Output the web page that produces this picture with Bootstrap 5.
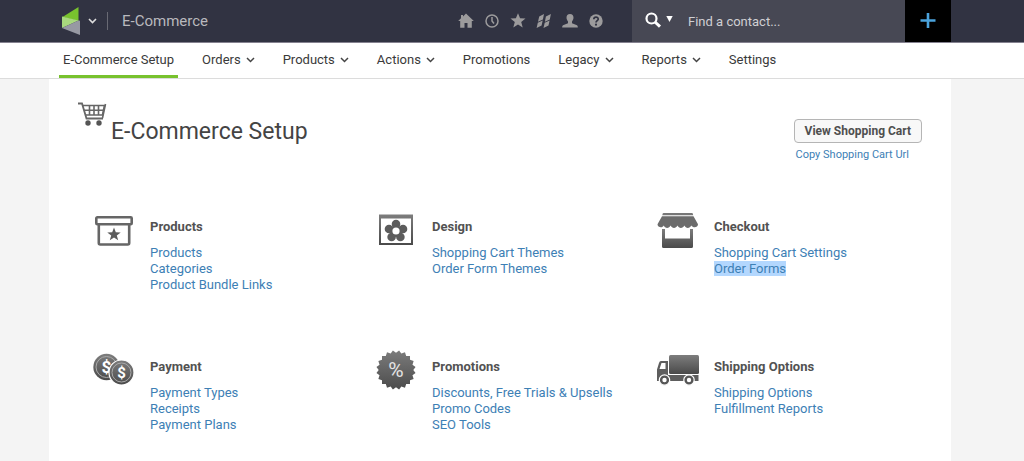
<!DOCTYPE html>
<html lang="en">
<head>
<meta charset="utf-8">
<meta name="viewport" content="width=device-width, initial-scale=1">
<title>E-Commerce Setup</title>
<link href="https://cdn.jsdelivr.net/npm/bootstrap@5.3.0/dist/css/bootstrap.min.css" rel="stylesheet">
<style>
  body { font: 13px/16px Roboto, "Liberation Sans", sans-serif; background: #f4f4f4; color: #444; }
  a { color: #3d80b5; text-decoration: none; }
  a:hover { text-decoration: underline; }
  svg { display: block; }
  .gutters { padding-left: 49px; padding-right: 73px; }

  .topbar { background: #313342; border-bottom: 1px solid #858290; min-height: 43px; }
  .logo-btn { padding: 0 0 0 13px; gap: 8px; }
  .app-name { color: #b9b9bd; font-size: 15px; line-height: 18px; margin-left: 10px; padding-left: 14px; border-left: 1px solid #696a74; }
  .tools { gap: 8px; margin-right: 27px; }
  .tools a { color: #9c9b9c; }
  .finder { background: #474854; width: 273px; padding-left: 13px; color: #fff; }
  .finder input { background: none; border: 0; outline: 0; color: #fff; flex: 1; min-width: 0; padding: 2px 0 0 15px; }
  .finder input::placeholder { color: #cfcfd3; opacity: 1; }
  .add-btn { background: #000; width: 46px; color: #4ba3dc; }

  .subnav { background: #fff; border-bottom: 1px solid #dcdcdc; }
  .subnav .nav { gap: 20px; padding-left: 10px; }
  .subnav .nav-link { color: #3a3a3a; padding: 9px 4px 7px; gap: 5px; border-bottom: 3px solid transparent; }
  .subnav .nav-link.active { border-bottom-color: #78c22e; }

  .sheet { background: #fff; min-height: calc(100vh - 78px); padding: 22px 13px 27px 28px; }
  .page-title { font-size: 23px; line-height: 28px; margin: 17px 0 0 4px; color: #444; font-weight: 400; }
  .cart-actions { margin: 18px 16px 0 0; gap: 4px; }
  .cart-btn { font-size: 12px; line-height: 16px; font-weight: 700; color: #4f4f4f; background: #f8f8f8; border: 1px solid #b5b5b5; border-radius: 4px; padding: 3px 10px; }
  .copy-link { font-size: 11px; padding-left: 2px; }
  .groups { padding-left: 15px; row-gap: 59px; margin-top: 49px; }
  .group { min-height: 81px; }
  .pict { width: 44px; margin-right: 14px; overflow: visible; }
  .group h2 { font-size: 13px; line-height: 16px; font-weight: 700; color: #525252; margin: 7px 0 10px; }
  .picked { background: #b3d7fe; }
</style>
</head>
<body>
<header class="topbar gutters d-flex align-items-stretch">
  <div class="d-flex align-items-center">
    <button class="btn logo-btn border-0 d-flex align-items-center" type="button" aria-label="Switch app">
      <svg width="18" height="28" viewBox="0 0 18 28"><path d="M16.500 0v14L.5 10z" fill="#78c22e"/><path d="M0 9.500l16.500 4L0 21z" fill="#a9d97e"/><path d="M0 21l16.500-7.500 1.500.3V28z" fill="#9799a3"/></svg>
      <svg width="9" height="6" viewBox="0 0 9 6" fill="none" stroke="#ddd" stroke-width="1.600"><path d="M1 1l3.500 3.500L8 1"/></svg>
    </button>
    <span class="app-name">E-Commerce</span>
  </div>
  <nav class="tools d-flex align-items-center ms-auto" aria-label="Shortcuts">
    <a href="#" aria-label="Home"><svg width="18" height="16" viewBox="0 0 18 16" fill="currentColor"><path d="M9 .5l7.800 7.500h-2v6.800h-4.300V10h-3v4.800H3.200V8h-2L4 5.300V2h2v1.400z"/></svg></a>
    <a href="#" aria-label="Recent"><svg width="18" height="16" viewBox="0 0 18 16" fill="none" stroke="currentColor" stroke-width="1.500"><circle cx="9" cy="8" r="6"/><path d="M9 4v4l2 2.500"/></svg></a>
    <a href="#" aria-label="Favorites"><svg width="18" height="16" viewBox="0 0 18 16" fill="currentColor"><path d="M9 .3l2.100 5 5.400.3-4.300 3.500 1.500 5.400L9 11.500l-4.700 3L5.800 9.100 1.500 5.600l5.400-.3z"/></svg></a>
    <a href="#" aria-label="Campaigns"><svg width="18" height="16" viewBox="0 0 18 16" fill="currentColor"><path d="M4.200 3.500L9 1l-1.100 5.400L3 8.700zM10.900 3.500L15.900 1l-1.100 5.400-4.900 2.300zM2.800 9.800l4.900-2.400-1.100 5L1.600 15zM9.700 9.800l4.900-2.400-1.100 5L8.500 15z"/></svg></a>
    <a href="#" aria-label="Profile"><svg width="18" height="16" viewBox="0 0 18 16" fill="currentColor"><path d="M9 1c2.300 0 3.600 1.500 3.500 3.800-.1 1.700-.8 2.700-1.500 3.700v1.700l5 2c.7.400.8 1.400.8 2.300H1.200c0-.9.1-1.900.8-2.300l5-2V8.500C6.300 7.500 5.600 6.500 5.500 4.800 5.400 2.500 6.700 1 9 1z"/></svg></a>
    <a href="#" aria-label="Help"><svg width="18" height="16" viewBox="0 0 18 16"><circle cx="9" cy="8" r="6.700" fill="currentColor"/><path d="M6.800 6.300C6.900 3.400 11.300 3.600 11.200 6.200 11.100 7.700 9 7.700 9 9.600" fill="none" stroke="#313342" stroke-width="1.700"/><circle cx="9" cy="11.700" r="1.100" fill="#313342"/></svg></a>
  </nav>
  <form class="finder d-flex align-items-center" role="search">
    <button type="button" class="btn p-0 border-0 text-white d-flex gap-1" aria-label="Search type">
      <svg width="17" height="18" viewBox="0 0 17 18" fill="none" stroke="currentColor"><circle cx="6.500" cy="6.500" r="5" stroke-width="2.200"/><path d="M10 10l5 4.700" stroke-width="3"/></svg>
      <svg width="7" height="18" viewBox="0 0 7 18" fill="currentColor"><path d="M.3 4h6.400L3.500 10z"/></svg>
    </button>
    <input type="text" placeholder="Find a contact..." aria-label="Find a contact">
  </form>
  <button class="btn add-btn rounded-0 border-0 p-0 d-flex align-items-center justify-content-center" type="button" aria-label="Add">
    <svg width="16" height="18" viewBox="0 0 16 18" stroke="currentColor" stroke-width="2.600"><path d="M8 1v15M.5 8.500h15"/></svg>
  </button>
</header>

<nav class="subnav gutters" aria-label="E-Commerce">
  <ul class="nav">
    <li><a class="nav-link active" href="#" aria-current="page">E-Commerce Setup</a></li>
    <li><a class="nav-link d-flex align-items-center" href="#">Orders <svg width="9" height="6" viewBox="0 0 9 6" fill="none" stroke="#444" stroke-width="1.500"><path d="M1 1l3.500 3.500L8 1"/></svg></a></li>
    <li><a class="nav-link d-flex align-items-center" href="#">Products <svg width="9" height="6" viewBox="0 0 9 6" fill="none" stroke="#444" stroke-width="1.500"><path d="M1 1l3.500 3.500L8 1"/></svg></a></li>
    <li><a class="nav-link d-flex align-items-center" href="#">Actions <svg width="9" height="6" viewBox="0 0 9 6" fill="none" stroke="#444" stroke-width="1.500"><path d="M1 1l3.500 3.500L8 1"/></svg></a></li>
    <li><a class="nav-link" href="#">Promotions</a></li>
    <li><a class="nav-link d-flex align-items-center" href="#">Legacy <svg width="9" height="6" viewBox="0 0 9 6" fill="none" stroke="#444" stroke-width="1.500"><path d="M1 1l3.500 3.500L8 1"/></svg></a></li>
    <li><a class="nav-link d-flex align-items-center" href="#">Reports <svg width="9" height="6" viewBox="0 0 9 6" fill="none" stroke="#444" stroke-width="1.500"><path d="M1 1l3.500 3.500L8 1"/></svg></a></li>
    <li><a class="nav-link" href="#">Settings</a></li>
  </ul>
</nav>

<div class="gutters">
<main class="sheet">
  <div class="d-flex align-items-start">
    <svg width="30" height="26" viewBox="0 0 30 26" fill="none" stroke="#666"><path d="M1 2.500h4l4.500 15H26" stroke-width="1.800"/><path d="M5.500 4.500h22L25.500 14H9" stroke-width="1.700"/><path d="M7 9.300h19.500M12.500 4.500V14M17 4.500V14M21.500 4.500V14M28.500 3L25.500 17" stroke-width="1.600"/><g fill="#555" stroke="none"><circle cx="11" cy="22" r="2.700"/><circle cx="22" cy="22" r="2.700"/></g></svg>
    <h1 class="page-title">E-Commerce Setup</h1>
    <div class="cart-actions ms-auto d-flex flex-column align-items-start">
      <button type="button" class="btn cart-btn">View Shopping Cart</button>
      <a class="copy-link" href="#">Copy Shopping Cart Url</a>
    </div>
  </div>

  <svg width="0" height="0" class="position-absolute" aria-hidden="true"><defs>
    <linearGradient id="metal" x1="0" y1="0" x2="0" y2="1"><stop offset="0" stop-color="#7d7d7d"/><stop offset="1" stop-color="#4a4a4a"/></linearGradient>
    <clipPath id="seal"><rect x="8" y="4" width="28" height="28"/><rect x="8" y="4" width="28" height="28" transform="rotate(18 22 18)"/><rect x="8" y="4" width="28" height="28" transform="rotate(36 22 18)"/><rect x="8" y="4" width="28" height="28" transform="rotate(54 22 18)"/><rect x="8" y="4" width="28" height="28" transform="rotate(72 22 18)"/></clipPath>
  </defs></svg>

  <div class="groups row gx-0">
    <section class="group col-4 d-flex align-items-start">
      <svg class="pict" width="44" height="40" viewBox="0 0 44 40"><g fill="none" stroke="#666" stroke-width="2.600"><rect x="4.300" y="5.300" width="35.400" height="7" rx="1"/><path d="M6.800 12v19q0 1.500 1.500 1.500h27.400q1.500 0 1.500-1.500V12"/></g><path d="M22 15.500l1.800 4.700 4.900.2-3.900 3.100 1.400 4.800-4.200-2.700-4.200 2.700 1.400-4.800-3.900-3.100 4.900-.2z" fill="#5c5c5c"/></svg>
      <div><h2>Products</h2><ul class="list-unstyled mb-0"><li><a href="#">Products</a></li><li><a href="#">Categories</a></li><li><a href="#">Product Bundle Links</a></li></ul></div>
    </section>
    <section class="group col-4 d-flex align-items-start">
      <svg class="pict" width="44" height="40" viewBox="0 0 44 40"><path d="M5 2.500h34V33H5zM7 6.500V31h30V6.500z" fill="url(#metal)" fill-rule="evenodd"/><g fill="#5c5c5c"><circle cx="22" cy="12" r="4.300"/><circle cx="29" cy="17" r="4.300"/><circle cx="26.400" cy="25" r="4.300"/><circle cx="17.600" cy="25" r="4.300"/><circle cx="15" cy="17" r="4.300"/><circle cx="22" cy="19" r="6"/></g><circle cx="22" cy="19" r="3.600" fill="#fff"/></svg>
      <div><h2>Design</h2><ul class="list-unstyled mb-0"><li><a href="#">Shopping Cart Themes</a></li><li><a href="#">Order Form Themes</a></li></ul></div>
    </section>
    <section class="group col-4 d-flex align-items-start">
      <svg class="pict" width="44" height="40" viewBox="0 0 44 40"><path d="M7.500 1h28.500q1 0 1.200 2.300H6.300Q6.500 1 7.500 1z" fill="#777"/><path d="M6 4.200h31.500l4.500 8c0 3.500-5 4-6.700 1.200-1.500 3.300-5.500 3.300-6.900 0-1.500 3.300-5.500 3.300-6.900 0-1.500 3.300-5.500 3.300-6.900 0-1.500 3.300-5.500 3.300-6.900 0C6.700 16.200 1.500 15.700 1.500 12.200z" fill="#6c6c6c"/><path d="M6 17h3v9.500h25V17h3v17.500q0 1.500-1.500 1.500h-28q-1.500 0-1.500-1.500z" fill="url(#metal)"/></svg>
      <div><h2>Checkout</h2><ul class="list-unstyled mb-0"><li><a href="#">Shopping Cart Settings</a></li><li><a class="picked" href="#">Order Forms</a></li></ul></div>
    </section>
    <section class="group col-4 d-flex align-items-start">
      <svg class="pict" width="44" height="40" viewBox="0 0 44 40"><circle cx="14.500" cy="15" r="13.200" fill="url(#metal)"/><circle cx="14.500" cy="15" r="10.500" fill="none" stroke="#aaa"/><text x="14.500" y="21" text-anchor="middle" font-size="17" font-weight="700" fill="#fff">$</text><circle cx="29.500" cy="20.500" r="12.500" fill="url(#metal)" stroke="#fff" stroke-width="1.200"/><circle cx="29.500" cy="20.500" r="9.500" fill="none" stroke="#aaa"/><text x="29.500" y="26" text-anchor="middle" font-size="15" font-weight="700" fill="#fff">$</text></svg>
      <div><h2>Payment</h2><ul class="list-unstyled mb-0"><li><a href="#">Payment Types</a></li><li><a href="#">Receipts</a></li><li><a href="#">Payment Plans</a></li></ul></div>
    </section>
    <section class="group col-4 d-flex align-items-start">
      <svg class="pict" width="44" height="40" viewBox="0 0 44 40"><rect x="1" y="-3" width="42" height="42" fill="url(#metal)" clip-path="url(#seal)"/><text x="22" y="25" text-anchor="middle" font-size="21" fill="#e4e4e4">%</text></svg>
      <div><h2>Promotions</h2><ul class="list-unstyled mb-0"><li><a href="#">Discounts, Free Trials &amp; Upsells</a></li><li><a href="#">Promo Codes</a></li><li><a href="#">SEO Tools</a></li></ul></div>
    </section>
    <section class="group col-4 d-flex align-items-start">
      <svg class="pict" width="44" height="40" viewBox="0 0 44 40"><rect x="13" y="3" width="30" height="19" rx="1.500" fill="url(#metal)"/><path d="M5 9h7v14h30.500v6H1V17.500L3 11q.5-2 2-2zM5.500 11L3.500 17h6v-6z" fill="#5e5e5e" fill-rule="evenodd"/><g fill="#565656" stroke="#fff" stroke-width="1.200"><circle cx="8.500" cy="28" r="5.200"/><circle cx="33" cy="28" r="5.200"/></g><circle cx="8.500" cy="28" r="2.200" fill="#fff"/><circle cx="33" cy="28" r="2.200" fill="#fff"/></svg>
      <div><h2>Shipping Options</h2><ul class="list-unstyled mb-0"><li><a href="#">Shipping Options</a></li><li><a href="#">Fulfillment Reports</a></li></ul></div>
    </section>
  </div>
</main>
</div>
<script src="https://cdn.jsdelivr.net/npm/bootstrap@5.3.0/dist/js/bootstrap.bundle.min.js"></script>
</body>
</html>
